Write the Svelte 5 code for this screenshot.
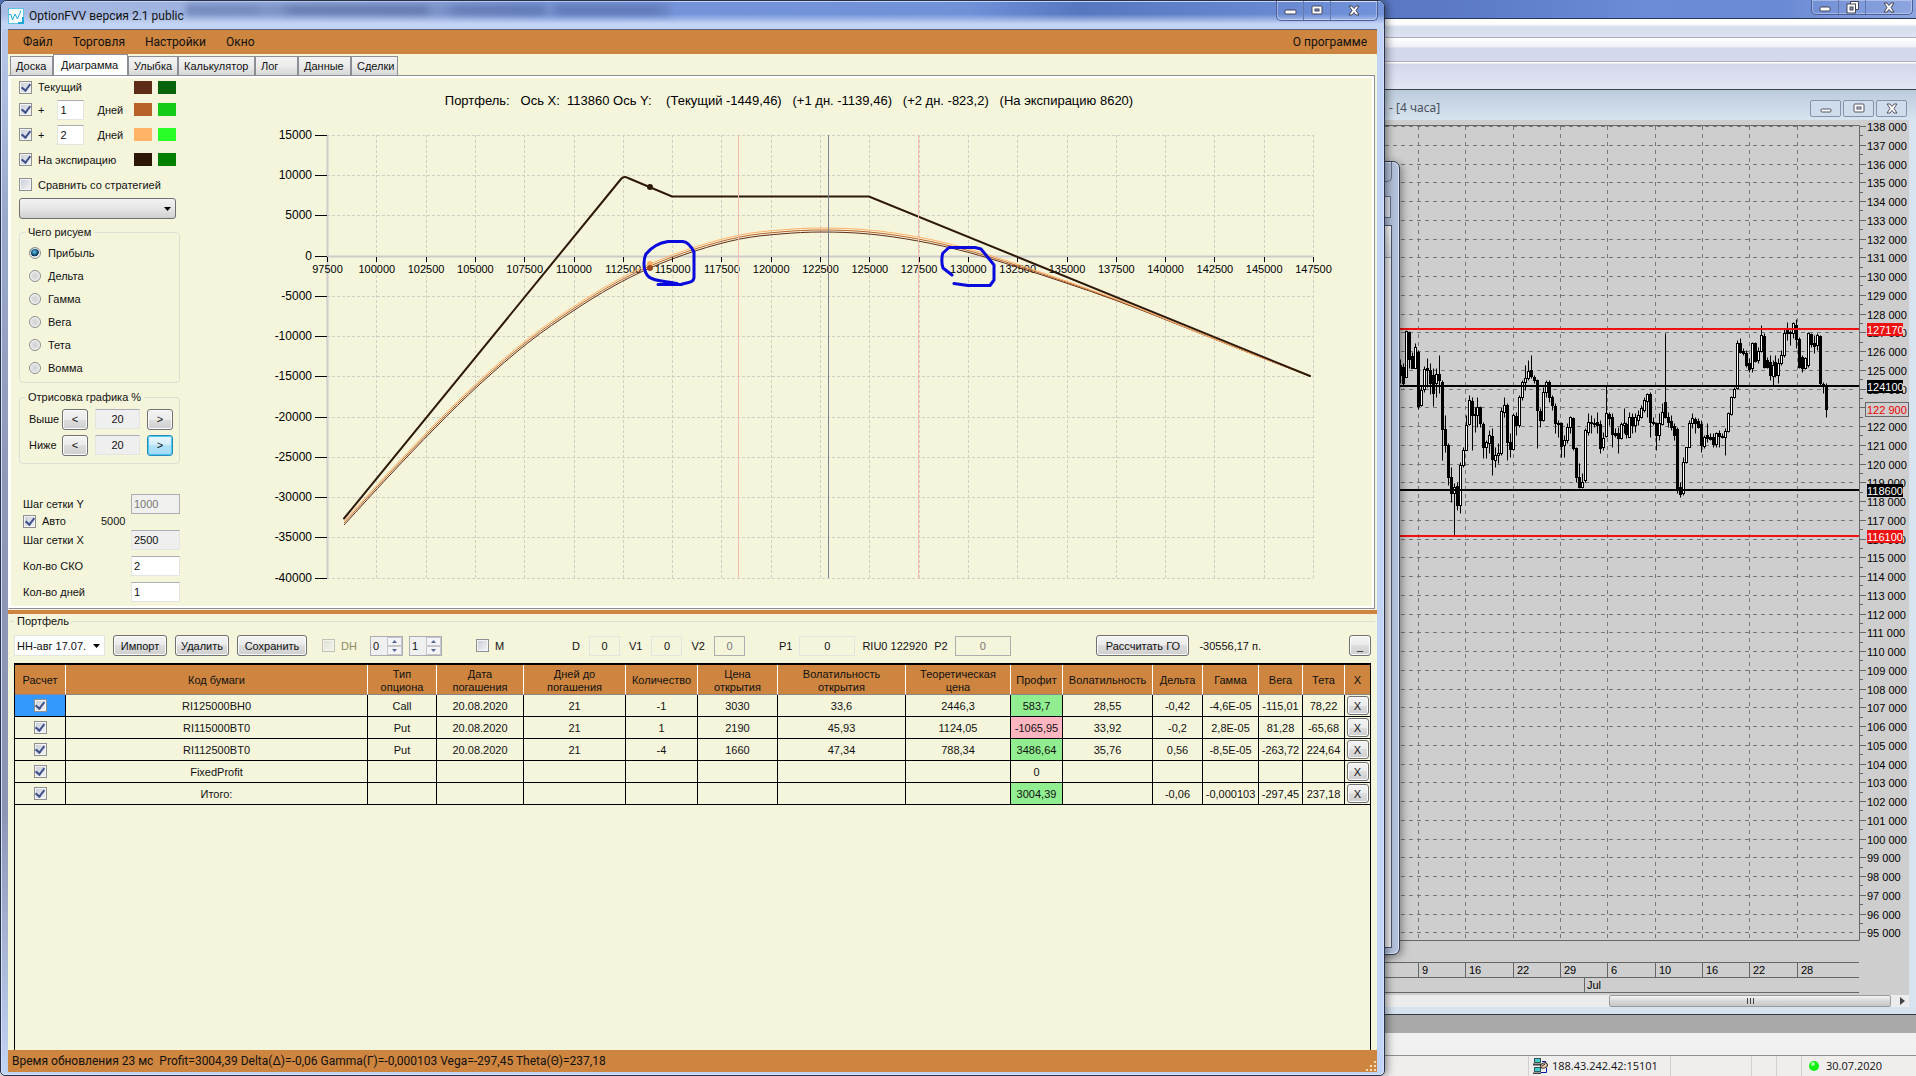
<script>
    let menu = ["Файл", "Торговля", "Настройки", "Окно"];
    let tabs = [
        { name: "Доска", w: 43 },
        { name: "Диаграмма", w: 75 },
        { name: "Улыбка", w: 50 },
        { name: "Калькулятор", w: 77 },
        { name: "Лог", w: 43 },
        { name: "Данные", w: 53 },
        { name: "Сделки", w: 47 },
    ];
    let activeTab = "Диаграмма";

    let curveKinds = ["Прибыль", "Дельта", "Гамма", "Вега", "Тета", "Вомма"];
    let kind = "Прибыль";

    let columns = [
        { name: "Расчет", w: 51 },
        { name: "Код бумаги", w: 0 },
        { name: "Тип опциона", w: 69 },
        { name: "Дата погашения", w: 87 },
        { name: "Дней до погашения", w: 102 },
        { name: "Количество", w: 72 },
        { name: "Цена открытия", w: 80 },
        { name: "Волатильность открытия", w: 128 },
        { name: "Теоретическая цена", w: 105 },
        { name: "Профит", w: 52 },
        { name: "Волатильность", w: 90 },
        { name: "Дельта", w: 50 },
        { name: "Гамма", w: 56 },
        { name: "Вега", w: 44 },
        { name: "Тета", w: 42 },
        { name: "X", w: 25 },
    ];
    let rows = [
        ["RI125000BH0", "Call", "20.08.2020", "21", "-1", "3030", "33,6", "2446,3", "583,7", "28,55", "-0,42", "-4,6E-05", "-115,01", "78,22"],
        ["RI115000BT0", "Put", "20.08.2020", "21", "1", "2190", "45,93", "1124,05", "-1065,95", "33,92", "-0,2", "2,8E-05", "81,28", "-65,68"],
        ["RI112500BT0", "Put", "20.08.2020", "21", "-4", "1660", "47,34", "788,34", "3486,64", "35,76", "0,56", "-8,5E-05", "-263,72", "224,64"],
        ["FixedProfit", "", "", "", "", "", "", "", "0", "", "", "", "", ""],
        ["Итого:", "", "", "", "", "", "", "", "3004,39", "", "-0,06", "-0,000103", "-297,45", "237,18"],
    ];
    const PROFIT = 8;

    function profitClass(i, value) {
        if (i !== PROFIT || value === "0") return "";
        return value.startsWith("-") ? "loss" : "gain";
    }

    // ---- график портфеля ----
    const px = (v) => 327.5 + ((v - 97500) / 2500) * 49.3;
    const py = (v) => 256.2 - (v / 5000) * 40.25;
    let xTicks = Array.from({ length: 21 }, (_, i) => 97500 + i * 2500);
    let yTicks = Array.from({ length: 12 }, (_, i) => 15000 - i * 5000);

    let current = [
        [344, 525], [390, 475], [435, 428], [480, 384], [529, 342], [573, 311], [612, 287],
        [650, 268], [695, 251], [740, 239], [780, 234], [822, 232], [869, 234], [918, 241],
        [967, 252], [1017, 267], [1066, 283], [1115, 300], [1164, 319], [1212, 338], [1260, 357], [1310, 376],
    ];

    // сплайн Катмулла-Рома через точки
    function smooth(pts, lift) {
        const p = pts.map(([x, y]) => [x, x > 1200 ? y : y - lift * (x > 940 ? (1200 - x) / 260 : 1)]);
        let d = `M${p[0][0]} ${p[0][1]}`;
        for (let i = 0; i < p.length - 1; i++) {
            const a = p[Math.max(i - 1, 0)];
            const b = p[i];
            const c = p[i + 1];
            const e = p[Math.min(i + 2, p.length - 1)];
            d += `C${b[0] + (c[0] - a[0]) / 6} ${b[1] + (c[1] - a[1]) / 6} ${c[0] - (e[0] - b[0]) / 6} ${c[1] - (e[1] - b[1]) / 6} ${c[0]} ${c[1]}`;
        }
        return d;
    }

    // ---- свечи: high, верх тела, низ тела, low, 1 = падение ----
    let candles = [
        [178,195,225,250,1],[190,200,250,255,1],[90,92,230,232,0],[92,95,178,205,1],[155,168,203,205,1],[130,140,203,205,0],
        [150,155,318,328,1],[255,270,315,318,0],[198,207,268,275,0],[175,205,210,260,1],[190,210,250,282,1],[205,225,280,318,1],
        [205,222,250,290,0],[165,222,240,280,1],[240,245,388,480,1],[345,388,435,455,1],[430,435,530,555,1],[500,530,580,605,1],
        [550,560,580,705,0],[545,558,615,630,1],[485,495,615,640,0],[440,450,495,500,0],[345,375,450,450,0],[285,300,372,375,0],
        [290,302,345,450,1],[320,342,345,395,1],[290,320,345,380,0],[318,322,370,380,1],[365,372,440,475,1],[420,427,440,475,0],
        [390,405,430,460,0],[385,407,478,525,1],[440,465,480,500,0],[430,460,465,490,0],[320,333,460,465,0],[290,315,335,350,0],
        [310,315,425,480,1],[400,425,447,470,1],[340,345,447,450,0],[335,348,375,405,1],[285,292,375,380,0],[240,245,292,300,0],
        [195,235,245,270,0],[180,212,235,240,0],[165,210,228,235,1],[225,232,240,250,1],[238,240,330,445,1],[325,332,360,380,1],
        [260,275,360,362,0],[240,245,275,290,0],[240,245,290,305,1],[285,290,315,330,1],[310,318,370,400,1],[360,368,372,410,1],
        [365,370,437,470,1],[405,420,435,470,0],[370,380,420,430,0],[348,350,380,400,0],[350,355,445,450,1],[440,445,530,545,1],
        [490,530,560,565,1],[520,545,560,565,0],[385,390,540,545,0],[340,365,395,405,0],[345,365,370,400,1],[355,368,372,380,1],
        [335,365,375,400,1],[360,372,445,460,1],[395,415,440,450,0],[255,340,408,410,0],[335,342,355,375,1],[340,350,402,440,1],
        [385,398,405,410,1],[380,400,415,460,1],[365,372,415,418,0],[325,370,375,400,0],[365,372,402,415,1],[335,350,410,412,0],
        [340,350,375,400,1],[340,350,375,395,0],[330,345,360,375,0],[315,325,350,355,0],[290,300,330,335,0],[278,283,302,350,0],
        [275,283,365,410,1],[350,365,370,375,1],[365,370,405,450,1],[340,368,405,420,0],[310,335,372,375,0],[100,305,350,355,1],
        [335,350,365,380,1],[345,362,380,390,1],[370,378,405,420,1],[380,388,570,578,1],[545,560,582,590,1],[470,485,580,585,0],
        [440,440,485,490,0],[360,368,440,440,0],[340,355,368,385,0],[350,358,370,400,1],[355,362,380,385,1],[360,372,435,455,1],
        [405,412,438,445,0],[370,405,415,425,1],[400,412,418,420,1],[398,412,432,440,1],[395,400,432,440,0],[390,398,408,440,1],
        [400,408,412,415,1],[385,392,410,465,0],[335,340,392,395,0],[288,292,342,345,0],[262,268,292,295,0],[120,130,265,268,0],
        [115,130,155,158,1],[145,152,158,165,1],[150,158,195,200,1],[175,190,207,215,1],[125,130,205,215,0],[125,130,182,185,1],
        [140,152,180,190,0],[75,105,152,155,0],[100,108,200,205,1],[170,180,202,205,1],[165,185,225,240,1],[180,195,228,255,0],
        [165,185,225,230,1],[175,188,225,248,0],[150,165,190,195,0],[85,100,165,170,0],[65,90,100,120,1],[90,95,100,135,0],
        [65,70,100,115,0],[58,75,118,145,1],[112,118,200,205,1],[165,172,205,215,1],[170,175,205,208,0],[95,100,195,200,0],
        [98,103,132,140,1],[105,130,138,160,1],[98,105,135,150,0],[105,108,250,255,1],[245,252,258,280,1],[250,258,328,350,1],
    ];
    const cx = (i) => Math.round(1401 + i * 2.98) - 0.5;
    const cy = (v) => Math.round(300 + v / 3) + 0.5;

    const priceY = (p) => Math.round(126 + (138 - p) * 18.75) + 0.5;
    let prices = Array.from({ length: 44 }, (_, i) => 138 - i);
    let days = [
        [1418, "9"], [1465, "16"], [1513, "22"], [1560, "29"], [1607, "6"],
        [1655, "10"], [1702, "16"], [1749, "22"], [1797, "28"],
    ];
    let levels = [
        { y: 329, label: "127170", color: "#ee1111" },
        { y: 386, label: "124100", color: "#000" },
        { y: 490, label: "118600", color: "#000" },
        { y: 536, label: "116100", color: "#ee1111" },
    ];
</script>

<div class="desktop">
    <!-- торговый терминал на заднем плане -->
    <section class="terminal">
        <header class="termTitle">
            <div class="winButtons">
                <button aria-label="Свернуть терминал"><svg width="12" height="11"><rect x="1" y="5" width="10" height="4" rx="1" fill="#fff" stroke="#445" /></svg></button>
                <button aria-label="Восстановить терминал"><svg width="13" height="13"><path d="M4.500 3V.5h8v8H10" fill="#fff" stroke="#445" /><rect x="1" y="3" width="8.500" height="9" fill="#fff" stroke="#445" /><rect x="4" y="6" width="3" height="3" fill="#89b" stroke="#445" /></svg></button>
                <button class="wide" aria-label="Закрыть терминал"><svg width="12" height="11"><path d="M1 1h3l2 2.500L8 1h3L8 5.500l3 4.500H8L6 7.500 4 10H1l3-4.500z" fill="#fff" stroke="#445" /></svg></button>
            </div>
        </header>
        <div class="band menuBand"></div>
        <div class="band toolBand"></div>
        <div class="band deepBand"></div>

        <div class="mdi">
            <header class="mdiTitle">
                <span class="mdiName">- [4 часа]</span>
                <div class="mdiButtons">
                    <button aria-label="Свернуть график"><svg width="12" height="11"><rect x="1" y="6" width="10" height="3" rx="1" fill="#fff" stroke="#556" /></svg></button>
                    <button aria-label="Развернуть график"><svg width="12" height="11"><rect x="1" y="1" width="10" height="8" rx="1" fill="#fff" stroke="#556" /><rect x="4" y="4" width="4" height="2" fill="#cde" stroke="#556" /></svg></button>
                    <button aria-label="Закрыть график"><svg width="12" height="11"><path d="M1 1h3l2 2.500L8 1h3L8 5.500l3 4.500H8L6 7.500 4 10H1l3-4.500z" fill="#fff" stroke="#556" /></svg></button>
                </div>
            </header>
            <div class="quotes">
                <svg viewBox="1377 120 532 875" preserveAspectRatio="xMaxYMin meet" role="img" aria-label="График цены">
                    <g stroke="#777" stroke-dasharray="4 4">
                        {#each prices as p}
                            <path d="M1377 {priceY(p)}H1856" />
                        {/each}
                        {#each days as [x]}
                            <path d="M{x + 0.5} 126V940" />
                        {/each}
                    </g>
                    <path d="M1377 125.500H1859.500V940.500H1377M1377 962.500H1859M1377 977.500H1859M1377 992.500H1859M1584.500 977V992" fill="none" stroke="#666" />
                    {#each prices as p}
                        <path d="M1860 {priceY(p)}h6" stroke="#666" />
                        {#if p > 95}
                            <path d="M1860 {priceY(p - 0.5)}h3" stroke="#666" />
                        {/if}
                        {#if p !== 123}
                            <text x="1867" y={priceY(p) + 4}>{p} 000</text>
                        {/if}
                    {/each}
                    {#each days as [x, d]}
                        <path d="M{x + 0.5} 962V977" stroke="#666" />
                        <text x={x + 4} y="974">{d}</text>
                    {/each}
                    <text x="1587" y="989">Jul</text>
                    {#each candles as [h, t, b, l, down], i}
                        <path d="M{cx(i)} {cy(h)}V{cy(l)}" stroke="#000" />
                        <rect x={cx(i) - 1} y={cy(t)} width="2" height={Math.max(cy(b) - cy(t), 1)} fill={down ? "#000" : "#fff"} stroke="#000" />
                    {/each}
                    {#each levels as lv}
                        <path d="M1377 {lv.y}H1859" stroke={lv.color} stroke-width="2" />
                        <rect x="1867" y={lv.y - 6} width="36" height="13" fill={lv.color} />
                        <text x="1867" y={lv.y + 5} fill="#fff">{lv.label}</text>
                    {/each}
                    <rect x="1865.500" y="402.500" width="43" height="14" fill="#cecece" stroke="#666" />
                    <text x="1867" y="414" fill="#e00">122 900</text>
                </svg>
            </div>
            <div class="hscroll">
                <div class="thumb"><i></i><i></i><i></i></div>
                <svg width="5" height="8"><path d="M0 0l5 4-5 4z" fill="#444" /></svg>
            </div>
        </div>
        <div class="workspace"></div>
        <div class="strip"></div>
        <footer class="termStatus">
            <span class="host">
                <svg width="15" height="16" viewBox="0 0 15 16">
                    <rect x="1.500" y=".5" width="6" height="4" fill="#4cc" stroke="#355" />
                    <path d="M0 6.500h8" stroke="#444" stroke-width="2" />
                    <rect x="1.500" y="9.500" width="6" height="4" fill="#4cc" stroke="#355" />
                    <path d="M0 15.500h8" stroke="#444" stroke-width="2" />
                    <path d="M9 3.500h3.500V6M8 14.500h5.500V10" fill="none" stroke="#0016a8" />
                    <ellipse cx="11" cy="7.500" rx="3.500" ry="2.500" fill="#eca" stroke="#222" transform="rotate(-20 11 7.500)" />
                    <path d="M9 8l3-2" stroke="#222" />
                </svg>
                188.43.242.42:15101
            </span>
            <span class="cell c1"></span>
            <span class="cell c2"></span>
            <span class="cell c3"></span>
            <span class="date">
                <svg width="10" height="10"><circle cx="5" cy="5" r="5" fill="#1e1" /><circle cx="4" cy="3" r="2" fill="#9f9" /></svg>
                30.07.2020
            </span>
        </footer>
    </section>

    <!-- окно между терминалом и основным -->
    <div class="behind">
        <div class="behindTitle"></div>
        <div class="behindField"></div>
        <div class="behindBody"></div>
    </div>

    <!-- основное окно -->
    <main class="window">
        <header class="title">
            <div class="glass"></div>
            <svg width="16" height="16" viewBox="0 0 16 16">
                <rect x=".5" y=".5" width="15" height="15" fill="#fff" stroke="#5cc4e4" />
                <path d="M1 6.500h2l1.500 5.500L7 6l2.500 5L13 2.500" fill="none" stroke="#1ba8d8" />
                <path d="M10 15h5V9" fill="none" stroke="#1ba8d8" stroke-width="2" />
            </svg>
            <h1>OptionFVV версия 2.1 public</h1>
            <div class="winButtons">
                <button aria-label="Свернуть"><svg width="13" height="11"><rect x="1" y="5" width="11" height="4" rx="1" fill="#fff" stroke="#445" /></svg></button>
                <button aria-label="Развернуть"><svg width="12" height="11"><rect x="1" y="1" width="10" height="8" rx="1" fill="#fff" stroke="#445" /><rect x="4" y="4" width="4" height="2" fill="#79c" stroke="#445" /></svg></button>
                <button class="wide" aria-label="Закрыть"><svg width="12" height="11"><path d="M1 1h3l2 2.500L8 1h3L8 5.500l3 4.500H8L6 7.500 4 10H1l3-4.500z" fill="#fff" stroke="#445" /></svg></button>
            </div>
        </header>

        <div class="client">
            <nav class="menubar">
                {#each menu as item}
                    <button>{item}</button>
                {/each}
                <button class="about">О программе</button>
            </nav>

            <div class="tabs" role="tablist">
                {#each tabs as tab}
                    <button role="tab" class:active={tab.name === activeTab} aria-selected={tab.name === activeTab} style="width: {tab.w}px" on:click={() => (activeTab = tab.name)}>{tab.name}</button>
                {/each}
            </div>

            <div class="panel">
                <aside class="side">
                    <div class="row">
                        <label><input type="checkbox" checked />Текущий</label>
                        <span class="swatches"><i class="brown"></i><i class="green1"></i></span>
                    </div>
                    <div class="row">
                        <label><input type="checkbox" checked />+</label>
                        <input class="days" type="text" value="1" aria-label="Дней вперед, первая кривая" />
                        <span>Дней</span>
                        <span class="swatches"><i class="rust"></i><i class="green2"></i></span>
                    </div>
                    <div class="row">
                        <label><input type="checkbox" checked />+</label>
                        <input class="days" type="text" value="2" aria-label="Дней вперед, вторая кривая" />
                        <span>Дней</span>
                        <span class="swatches"><i class="peach"></i><i class="green3"></i></span>
                    </div>
                    <div class="row">
                        <label><input type="checkbox" checked />На экспирацию</label>
                        <span class="swatches"><i class="dark"></i><i class="green4"></i></span>
                    </div>
                    <div class="row">
                        <label><input type="checkbox" />Сравнить со стратегией</label>
                    </div>
                    <div class="combo strategy">
                        <select aria-label="Стратегия"><option></option></select>
                        <svg width="7" height="4"><path d="M0 0h7L3.500 4z" /></svg>
                    </div>

                    <fieldset class="kinds">
                        <legend>Чего рисуем</legend>
                        {#each curveKinds as k}
                            <label><input type="radio" name="kind" value={k} bind:group={kind} />{k}</label>
                        {/each}
                    </fieldset>

                    <fieldset class="range">
                        <legend>Отрисовка графика %</legend>
                        <div class="rangeRow">
                            <label for="above">Выше</label>
                            <button class="btn">&lt;</button>
                            <input id="above" type="text" value="20" readonly />
                            <button class="btn">&gt;</button>
                        </div>
                        <div class="rangeRow">
                            <label for="below">Ниже</label>
                            <button class="btn">&lt;</button>
                            <input id="below" type="text" value="20" readonly />
                            <button class="btn hot">&gt;</button>
                        </div>
                    </fieldset>

                    <div class="steps">
                        <div class="step"><label for="stepY">Шаг сетки Y</label><input id="stepY" type="text" value="1000" disabled /></div>
                        <div class="auto"><label><input type="checkbox" checked />Авто</label><span>5000</span></div>
                        <div class="step"><label for="stepX">Шаг сетки X</label><input id="stepX" type="text" value="2500" readonly /></div>
                        <div class="step gap"><label for="sko">Кол-во СКО</label><input id="sko" type="text" value="2" /></div>
                        <div class="step gap"><label for="dayCount">Кол-во дней</label><input id="dayCount" type="text" value="1" /></div>
                    </div>
                </aside>

                <svg class="plot" viewBox="180 77 1192 529" role="img" aria-label="Портфель">
                    <text class="plotTitle" x="789" y="105" text-anchor="middle" xml:space="preserve">Портфель:   Ось X:  113860 Ось Y:    (Текущий -1449,46)   (+1 дн. -1139,46)   (+2 дн. -823,2)   (На экспирацию 8620)</text>
                    <g stroke="#cfcfc4" stroke-dasharray="3 2">
                        {#each xTicks as v}
                            <path d="M{Math.floor(px(v)) + 0.5} 135V578" />
                        {/each}
                        {#each yTicks as v}
                            <path d="M327 {Math.floor(py(v)) + 0.5}H1313" />
                        {/each}
                    </g>
                    <path d="M327.500 135V578M327 256.500H1313" stroke="#ccc" stroke-width="2" />
                    <g class="yLabels">
                        {#each yTicks as v}
                            <path d="M315 {Math.floor(py(v)) + 0.5}h12" stroke="#000" />
                            <text x="312" y={Math.floor(py(v)) + 4} text-anchor="end">{v}</text>
                        {/each}
                    </g>
                    {#each xTicks as v}
                        <path d="M{Math.floor(px(v)) + 0.5} 257v5" stroke="#000" />
                        <text class="xLabel" x={px(v)} y="273" text-anchor="middle">{v}</text>
                    {/each}
                    <g fill="none">
                        <path d={smooth(current, 0)} stroke="#5c2c16" />
                        <path d={smooth(current, 2)} stroke="#b8622a" />
                        <path d={smooth(current, 4)} stroke="#ffb066" />
                        <path d="M344 518.500L621 179Q624 175.500 628 178L672 196.500H869L1310 376" stroke="#2e1808" stroke-width="2" stroke-linecap="round" />
                        <path d="M738.500 135V578M918.500 135V578" stroke="#f2bcae" />
                        <path d="M828.500 135V578" stroke="#7c8490" />
                    </g>
                    <circle cx="650" cy="187" r="3" fill="#2e1808" />
                    <circle cx="650" cy="264" r="3" fill="#ffb066" />
                    <circle cx="650" cy="268" r="3" fill="#9a4a1c" />
                    <g fill="none" stroke="#0a0adc" stroke-width="3" stroke-linecap="round" stroke-linejoin="round">
                        <path d="M694 252C691 246 687 242 683 241.500H668C658 243 650 249 646 254C643 260 643 272 649 277C655 282 668 281 677 283.500M658 284.500H681C688 282 694 283 694 277V252" />
                        <path d="M952 275L943 268C941 262 942 255 943 253L949 247.500H975L981 249L990 260L994 265V280L990 285.500H968L954 283.500" />
                    </g>
                </svg>
            </div>

            <div class="splitter"></div>

            <fieldset class="portfolio">
                <legend>Портфель</legend>
                <div class="tools">
                    <div class="group">
                        <div class="combo pick">
                            <select aria-label="Портфель"><option>НН-авг 17.07.</option></select>
                            <svg width="7" height="4"><path d="M0 0h7L3.500 4z" /></svg>
                        </div>
                        <button class="btn w54">Импорт</button>
                        <button class="btn w54">Удалить</button>
                        <button class="btn w70">Сохранить</button>
                    </div>
                    <div class="group dh">
                        <label class="off"><input type="checkbox" disabled />DH</label>
                        <span class="spin"><input type="text" value="0" aria-label="DH, нижний" /><svg width="15" height="18"><path d="M.5.500h14v8H.5zM.5 9.500h14v8H.5z" fill="#f4f4f6" stroke="#c4c6cc" /><path d="M5 6l2.500-3L10 6zM5 12l2.500 3L10 12z" fill="#55689a" /></svg></span>
                        <span class="spin"><input type="text" value="1" aria-label="DH, верхний" /><svg width="15" height="18"><path d="M.5.500h14v8H.5zM.5 9.500h14v8H.5z" fill="#f4f4f6" stroke="#c4c6cc" /><path d="M5 6l2.500-3L10 6zM5 12l2.500 3L10 12z" fill="#55689a" /></svg></span>
                    </div>
                    <div class="group m"><label><input type="checkbox" />М</label></div>
                    <div class="group greeks">
                        <label for="fd">D</label><input id="fd" class="flat" type="text" value="0" />
                        <label for="fv1">V1</label><input id="fv1" class="flat" type="text" value="0" />
                        <label for="fv2">V2</label><input id="fv2" class="flat" type="text" value="0" disabled />
                    </div>
                    <div class="group prices">
                        <label for="fp1">P1</label><input id="fp1" class="flat" type="text" value="0" />
                        <span>RIU0 122920</span>
                        <label for="fp2">P2</label><input id="fp2" class="flat" type="text" value="0" disabled />
                    </div>
                    <div class="group margin">
                        <button class="btn w93">Рассчитать ГО</button>
                        <span>-30556,17 п.</span>
                    </div>
                    <button class="btn mini">_</button>
                </div>

                <div class="grid">
                    <table>
                        <colgroup>
                            {#each columns as c}
                                <col style={c.w ? `width: ${c.w}px` : ""} />
                            {/each}
                        </colgroup>
                        <thead>
                            <tr>
                                {#each columns as c}
                                    <th>{c.name}</th>
                                {/each}
                            </tr>
                        </thead>
                        <tbody>
                            {#each rows as row, r}
                                <tr>
                                    <td class:selected={r === 0}><input type="checkbox" checked aria-label={row[0]} /></td>
                                    {#each row as value, i}
                                        <td class={profitClass(i, value)}>{value}</td>
                                    {/each}
                                    <td class="del"><button class="btn">X</button></td>
                                </tr>
                            {/each}
                        </tbody>
                    </table>
                </div>
            </fieldset>

            <footer class="status">
                <span>Время обновления 23 мс&nbsp; Profit=3004,39 Delta(Δ)=-0,06 Gamma(Γ)=-0,000103 Vega=-297,45 Theta(Θ)=237,18</span>
                <svg width="12" height="12" fill="#f6dcb8"><path d="M9 1h2v2H9zM5 5h2v2H5zM9 5h2v2H9zM1 9h2v2H1zM5 9h2v2H5zM9 9h2v2H9z" /></svg>
            </footer>
        </div>
    </main>
</div>

<style>
    :global(body) {
        margin: 0;
        overflow: hidden;
    }

    .desktop {
        position: relative;
        height: 100vh;
        overflow: hidden;
        font: 11px/14px "Liberation Sans", Arial, sans-serif;
        color: #111;
    }

    .desktop * {
        box-sizing: border-box;
    }

    button,
    input,
    select {
        font: inherit;
        color: inherit;
        margin: 0;
        padding: 0;
    }

    svg {
        display: block;
        flex: none;
    }

    /* ---------- терминал ---------- */
    .terminal {
        height: 100%;
        display: flex;
        flex-direction: column;
        background: #f0f0f0;
    }

    .termTitle {
        height: 19px;
        display: flex;
        justify-content: flex-end;
        padding-right: 3px;
        background: linear-gradient(90deg, #5a78c4 75%, #6c8cd8 86%, #6a8ad4 93%, #8ea6e0);
        border-bottom: 1px solid #28345a;
    }

    .winButtons {
        display: flex;
        align-self: flex-start;
        border: 1px solid #4c5f96;
        border-top: 0;
        border-radius: 0 0 5px 5px;
        box-shadow: inset 0 0 0 1px #ffffff55;
    }

    .winButtons button {
        width: 27px;
        height: 14px;
        display: flex;
        align-items: center;
        justify-content: center;
        border: 0;
        border-right: 1px solid #6478ae;
        background: none;
    }

    .winButtons .wide {
        width: 46px;
        border-right: 0;
    }

    .band {
        border-bottom: 1px solid #a9abb8;
    }

    .menuBand {
        height: 19px;
        background: linear-gradient(#fff 0 5px, #d4deeb 8px, #dfe3f3);
    }

    .toolBand {
        height: 24px;
        background: linear-gradient(#fff, #eef0f6 9px, #d3d7ea 10px, #d5d9ed);
    }

    .deepBand {
        height: 28px;
        background: linear-gradient(#fff 1px, #d3d7ea 2px, #e3e6f4);
        border-color: #3a424e;
    }

    .mdi {
        flex: 1;
        min-height: 0;
        display: flex;
        flex-direction: column;
        padding: 0 7px 7px 0;
        background: #d7e4f0;
        border-bottom: 1px solid #303a48;
        border-radius: 0 6px 0 0;
    }

    .mdiTitle {
        height: 30px;
        display: flex;
        align-items: center;
        justify-content: flex-end;
        margin-right: -7px;
        padding: 8px 9px 2px 0;
        background: linear-gradient(#bccbdb, #d7e4f0);
    }

    .mdiName {
        width: 421px;
        color: #4a525c;
        font: 12px/16px "Noto Sans", sans-serif;
    }

    .mdiButtons {
        display: flex;
        gap: 2px;
    }

    .mdiButtons button {
        width: 31px;
        height: 17px;
        display: flex;
        align-items: center;
        justify-content: center;
        border: 1px solid #8494ac;
        border-radius: 2px;
        background: #cfdceb;
    }

    .quotes {
        flex: 1;
        min-height: 0;
        background: #cecece;
    }

    .quotes svg {
        width: 100%;
        height: 100%;
    }

    .hscroll {
        height: 12px;
        display: flex;
        align-items: center;
        justify-content: flex-end;
        gap: 9px;
        padding-right: 4px;
        background: #ececec;
    }

    .thumb {
        width: 282px;
        height: 12px;
        display: flex;
        align-items: center;
        justify-content: center;
        gap: 2px;
        border: 1px solid #9a9a9a;
        border-radius: 2px;
        background: linear-gradient(#f4f4f4, #d8d8d8 50%, #c8c8c8);
    }

    .thumb i {
        width: 1px;
        height: 6px;
        background: #444;
    }

    .workspace {
        height: 18px;
        background: #a9a9a9;
    }

    .strip {
        height: 22px;
        background: #f0f0f0;
    }

    .termStatus {
        height: 21px;
        display: flex;
        justify-content: flex-end;
        border-top: 1px solid #8f8f8f;
        background: #f0eded;
        font: 11px/20px "Open Sans", sans-serif;
    }

    .termStatus span {
        display: flex;
        align-items: center;
        border-left: 1px solid #d2d0d0;
    }

    .host {
        width: 142px;
        gap: 4px;
        padding-left: 4px;
    }

    .c1 {
        width: 81px;
    }

    .c2 {
        width: 25px;
    }

    .c3 {
        width: 25px;
    }

    .date {
        width: 115px;
        gap: 7px;
        padding-left: 7px;
    }

    /* ---------- окно позади ---------- */
    .behind {
        position: absolute;
        top: 161px;
        right: 516px;
        bottom: 121px;
        width: 200px;
        display: flex;
        flex-direction: column;
        padding: 0 7px 6px;
        border: 1px solid #333c50;
        border-radius: 7px;
        background: #b4c1da;
        box-shadow: 2px 2px 8px #0006, inset 0 0 0 1px #dde5f4;
    }

    .behindTitle {
        height: 20px;
        border: 1px solid #66738e;
        border-top: 0;
        border-radius: 0 0 5px 5px;
    }

    .behindField {
        height: 22px;
        margin: 14px 1px 7px;
        border: 1px solid #66738e;
        background: #e0e4ec;
    }

    .behindBody {
        flex: 1;
        border: 1px solid #4c566c;
        background: linear-gradient(#fff, #dcdfe6 31px, #9a9eaa 31px 32px, #f1f1f3 32px);
    }

    /* ---------- основное окно ---------- */
    .window {
        position: absolute;
        inset: 0 531px 0 0;
        display: flex;
        flex-direction: column;
        padding: 0 7px 3px;
        border: 1px solid #28324a;
        border-radius: 7px 7px 5px 5px;
        background: linear-gradient(#bccdf0, #9aaacb 20%, #9098b8 45%, #8c94b4 75%, #c2d4f4);
        box-shadow: 2px 0 8px #0007, inset 0 0 0 1px #d5e2f8, inset -7px 0 0 #c3d4f6;
        overflow: hidden;
    }

    .title {
        position: relative;
        height: 28px;
        display: flex;
        align-items: center;
        gap: 5px;
        margin: 0 -7px;
        padding: 0 6px 0 7px;
        background:
            linear-gradient(#fff0 12px, #c4d4f4 22px),
            linear-gradient(90deg, #a9bce4, #8fa6da 30%, #7695da 40%, #7090d8 70%, #5676c0 78%, #7292da);
        border-top: 1px solid #c4d4f4;
    }

    /* размытый заголовок терминала под стеклом */
    .glass {
        position: absolute;
        top: 2px;
        left: 185px;
        width: 485px;
        height: 12px;
        background: linear-gradient(90deg, #5d73aa 0 14%, #6c82b8 16% 19%, #4d639c 22% 49%, #7088bc 51% 53%, #546aa2 56% 73%, #7890c4 75%, #566ca6 77% 96%, #6c84be);
        opacity: 0.6;
        filter: blur(3px);
    }

    .title h1 {
        flex: 1;
        margin: 0;
        font: 12px/16px Roboto, sans-serif;
    }

    .title .winButtons {
        margin-top: -1px;
    }

    .title .winButtons button {
        height: 19px;
    }

    .client {
        flex: 1;
        min-height: 0;
        display: flex;
        flex-direction: column;
        border-top: 1px solid #5a6478;
        background: #f5f5dc;
    }

    .menubar {
        height: 24px;
        display: flex;
        gap: 20px;
        padding: 0 10px 0 15px;
        background: #cd853f;
        font: 12px/24px Roboto, sans-serif;
    }

    .menubar button {
        border: 0;
        background: none;
    }

    .menubar .about {
        margin-left: auto;
    }

    .tabs {
        height: 21px;
        display: flex;
        align-items: flex-end;
        padding-left: 2px;
    }

    .tabs button {
        height: 19px;
        border: 1px solid #8b8e94;
        border-bottom: 0;
        background: linear-gradient(#f3f3f3, #ebebeb 50%, #d6d6d6);
        text-align: left;
        padding-left: 5px;
        white-space: nowrap;
    }

    .tabs .active {
        height: 21px;
        padding-left: 7px;
        background: #fff;
    }

    .panel {
        height: 534px;
        display: flex;
        margin-right: 2px;
        border: 1px solid #8b8e94;
        border-left-color: #fff;
        box-shadow: inset 0 0 0 2px #fff;
        padding: 1px 2px 2px;
    }

    .side {
        width: 169px;
        padding-left: 8px;
        flex: none;
    }

    .row {
        height: 25px;
        width: 157px;
        display: flex;
        align-items: center;
    }

    .row:first-child {
        height: 20px;
    }

    label {
        display: flex;
        align-items: center;
        gap: 6px;
        white-space: nowrap;
    }

    .swatches {
        display: flex;
        gap: 6px;
        margin-left: auto;
    }

    .swatches i {
        width: 18px;
        height: 13px;
    }

    .brown {
        background: #5c2c16;
    }

    .rust {
        background: #b8622a;
    }

    .peach {
        background: #ffb366;
    }

    .dark {
        background: #2e1604;
    }

    .green1 {
        background: #08640c;
    }

    .green2 {
        background: #14cc18;
    }

    .green3 {
        background: #28ff28;
    }

    .green4 {
        background: #008000;
    }

    input[type="checkbox"] {
        appearance: none;
        flex: none;
        width: 13px;
        height: 13px;
        display: grid;
        place-items: center;
        border: 1px solid #8e8f8f;
        background: linear-gradient(135deg, #c6cbd6, #f6f6f6);
        box-shadow: inset 0 0 0 1px #f4f4f4;
    }

    input[type="checkbox"]:checked::before {
        content: "";
        width: 4px;
        height: 7px;
        margin-bottom: 2px;
        border: solid #3f528c;
        border-width: 0 2px 2px 0;
        transform: rotate(38deg);
    }

    input[type="radio"] {
        appearance: none;
        width: 12px;
        height: 12px;
        border: 1px solid #8e8f8f;
        border-radius: 50%;
        background: radial-gradient(#d0d0d0, #f0f0f0);
        box-shadow: inset 0 0 0 1px #f4f4f4;
    }

    input[type="radio"]:checked {
        background: radial-gradient(circle at 45% 40%, #6cc8f0, #0c4a74 40%, #10344e 50%, #eee 58%);
    }

    input[type="text"] {
        height: 20px;
        min-width: 0;
        border: 1px solid #e3e5e0;
        border-top-color: #abadb3;
        background: #fff;
        padding: 0 2px;
    }

    input[type="text"]:read-only {
        background: #efefef;
    }

    input[type="text"]:disabled {
        border-color: #aeaeae;
        background: #f0f0ee;
        color: #777;
    }

    .days {
        width: 27px;
        margin: 0 13px;
    }

    .combo {
        display: grid;
        align-items: center;
    }

    .combo > * {
        grid-area: 1 / 1;
    }

    .combo svg {
        justify-self: end;
        margin-right: 5px;
        pointer-events: none;
    }

    .combo select {
        appearance: none;
        width: 100%;
        height: 21px;
    }

    .strategy {
        width: 157px;
        margin-top: 1px;
    }

    .strategy select {
        border: 1px solid #707070;
        border-radius: 3px;
        background: linear-gradient(#f2f2f2, #e6e6e6 50%, #d0d0d0);
    }

    fieldset {
        min-width: 0;
        margin: 0;
        padding: 0;
        border: 1px solid #dcdfd6;
        border-radius: 4px;
    }

    legend {
        height: 14px;
        padding: 0 3px;
    }

    .kinds,
    .range {
        width: 161px;
        padding: 2px 9px 3px;
    }

    .kinds {
        margin-top: 6px;
    }

    .kinds legend,
    .range legend {
        margin-left: -4px;
    }

    .kinds label {
        height: 23px;
        gap: 7px;
    }

    .range {
        margin-top: 7px;
        padding: 2px 6px 5px 9px;
    }

    .rangeRow {
        height: 26px;
        display: flex;
        align-items: center;
        gap: 7px;
    }

    .rangeRow label {
        width: 26px;
    }

    .rangeRow input[type="text"] {
        width: 45px;
        text-align: center;
    }

    .rangeRow .btn {
        width: 26px;
    }

    .btn {
        height: 21px;
        border: 1px solid #707070;
        border-radius: 3px;
        background: linear-gradient(#f3f3f3, #ebebeb 50%, #dddddd 50%, #cfcfcf);
        box-shadow: inset 0 0 0 1px #fafafa;
        white-space: nowrap;
    }

    .hot {
        border-color: #2c8bb8;
        background: linear-gradient(#eaf6fd, #d0edfb 50%, #b4e2f8 50%, #a0daf5);
        box-shadow: inset 0 0 0 1px #48c8f0;
    }

    .steps {
        width: 161px;
        margin-top: 30px;
        padding-left: 4px;
    }

    .step {
        display: flex;
        align-items: center;
        justify-content: space-between;
    }

    .step input[type="text"] {
        width: 49px;
    }

    .gap {
        margin-top: 6px;
    }

    .auto {
        height: 16px;
        display: flex;
        align-items: flex-start;
        gap: 35px;
    }

    .plot {
        flex: 1;
        min-width: 0;
        height: 100%;
    }

    .plotTitle {
        font-size: 13px;
        white-space: pre;
    }

    .yLabels {
        font-size: 12px;
    }

    .splitter {
        height: 4px;
        margin-top: 1px;
        background: #cd853f;
    }

    .portfolio {
        flex: 1;
        min-height: 0;
        display: flex;
        flex-direction: column;
        margin: 0 2px 0 2px;
        padding: 6px 4px 0;
        border-width: 1px 0 0;
        border-radius: 0;
    }

    .tools {
        height: 23px;
        display: flex;
        align-items: center;
    }

    .group {
        display: flex;
        align-items: center;
        gap: 8px;
    }

    .pick {
        width: 91px;
    }

    .pick select {
        border: 1px solid #e3e5e0;
        background: #fff;
        padding-left: 2px;
    }

    .w54 {
        width: 54px;
    }

    .w70 {
        width: 70px;
    }

    .w93 {
        width: 93px;
    }

    .dh {
        margin-left: 15px;
        gap: 6px;
    }

    .dh .off {
        margin-right: 7px;
        color: #8c8a5c;
    }

    .off input {
        opacity: 0.5;
    }

    .spin {
        width: 33px;
        height: 20px;
        display: flex;
        align-items: center;
        border: 1px solid #abadb3;
        background: #f0f0f0;
    }

    .spin input[type="text"] {
        width: 16px;
        height: 18px;
        border: 0;
        background: none;
    }

    .m {
        margin-left: 34px;
    }

    .greeks {
        margin-left: 68px;
        gap: 9px;
    }

    .greeks .flat {
        width: 31px;
    }

    .flat[type="text"] {
        text-align: center;
        background: #f5f5dc;
        border-color: #e3e5e0;
    }

    .flat[type="text"]:disabled {
        background: #f5f5dc;
        border-color: #aeaeae;
    }

    .prices {
        margin-left: 34px;
        gap: 7px;
    }

    .prices .flat {
        width: 56px;
    }

    .margin {
        margin-left: auto;
        gap: 10px;
    }

    .mini {
        width: 22px;
        margin-left: 88px;
    }

    .grid {
        flex: 1;
        min-height: 0;
        margin-top: 6px;
        border: 1px solid #000;
        border-top-width: 2px;
        border-bottom: 0;
    }

    table {
        width: 100%;
        table-layout: fixed;
        border-collapse: separate;
        border-spacing: 0;
    }

    th {
        height: 30px;
        padding: 2px 2px 0;
        border-right: 1px solid #fff;
        border-bottom: 1px solid #888;
        background: #cd853f;
        font-weight: normal;
        line-height: 13px;
        overflow: hidden;
    }

    td {
        height: 22px;
        padding: 0;
        border-right: 1px solid #000;
        border-bottom: 1px solid #000;
        text-align: center;
        white-space: nowrap;
        overflow: hidden;
    }

    th:last-child,
    td:last-child {
        border-right: 0;
    }

    td input[type="checkbox"] {
        margin: 0 auto;
    }

    .selected {
        background: #3399ff;
    }

    .gain {
        background: #90ee90;
    }

    .loss {
        background: #ffb6c1;
    }

    .del .btn {
        width: 22px;
        height: 19px;
        display: block;
        margin: 0 auto;
    }

    .status {
        height: 22px;
        display: flex;
        align-items: center;
        justify-content: space-between;
        padding-left: 4px;
        background: #cd853f;
        font: 12px/22px Roboto, sans-serif;
    }

    .status svg {
        align-self: flex-end;
    }
</style>
